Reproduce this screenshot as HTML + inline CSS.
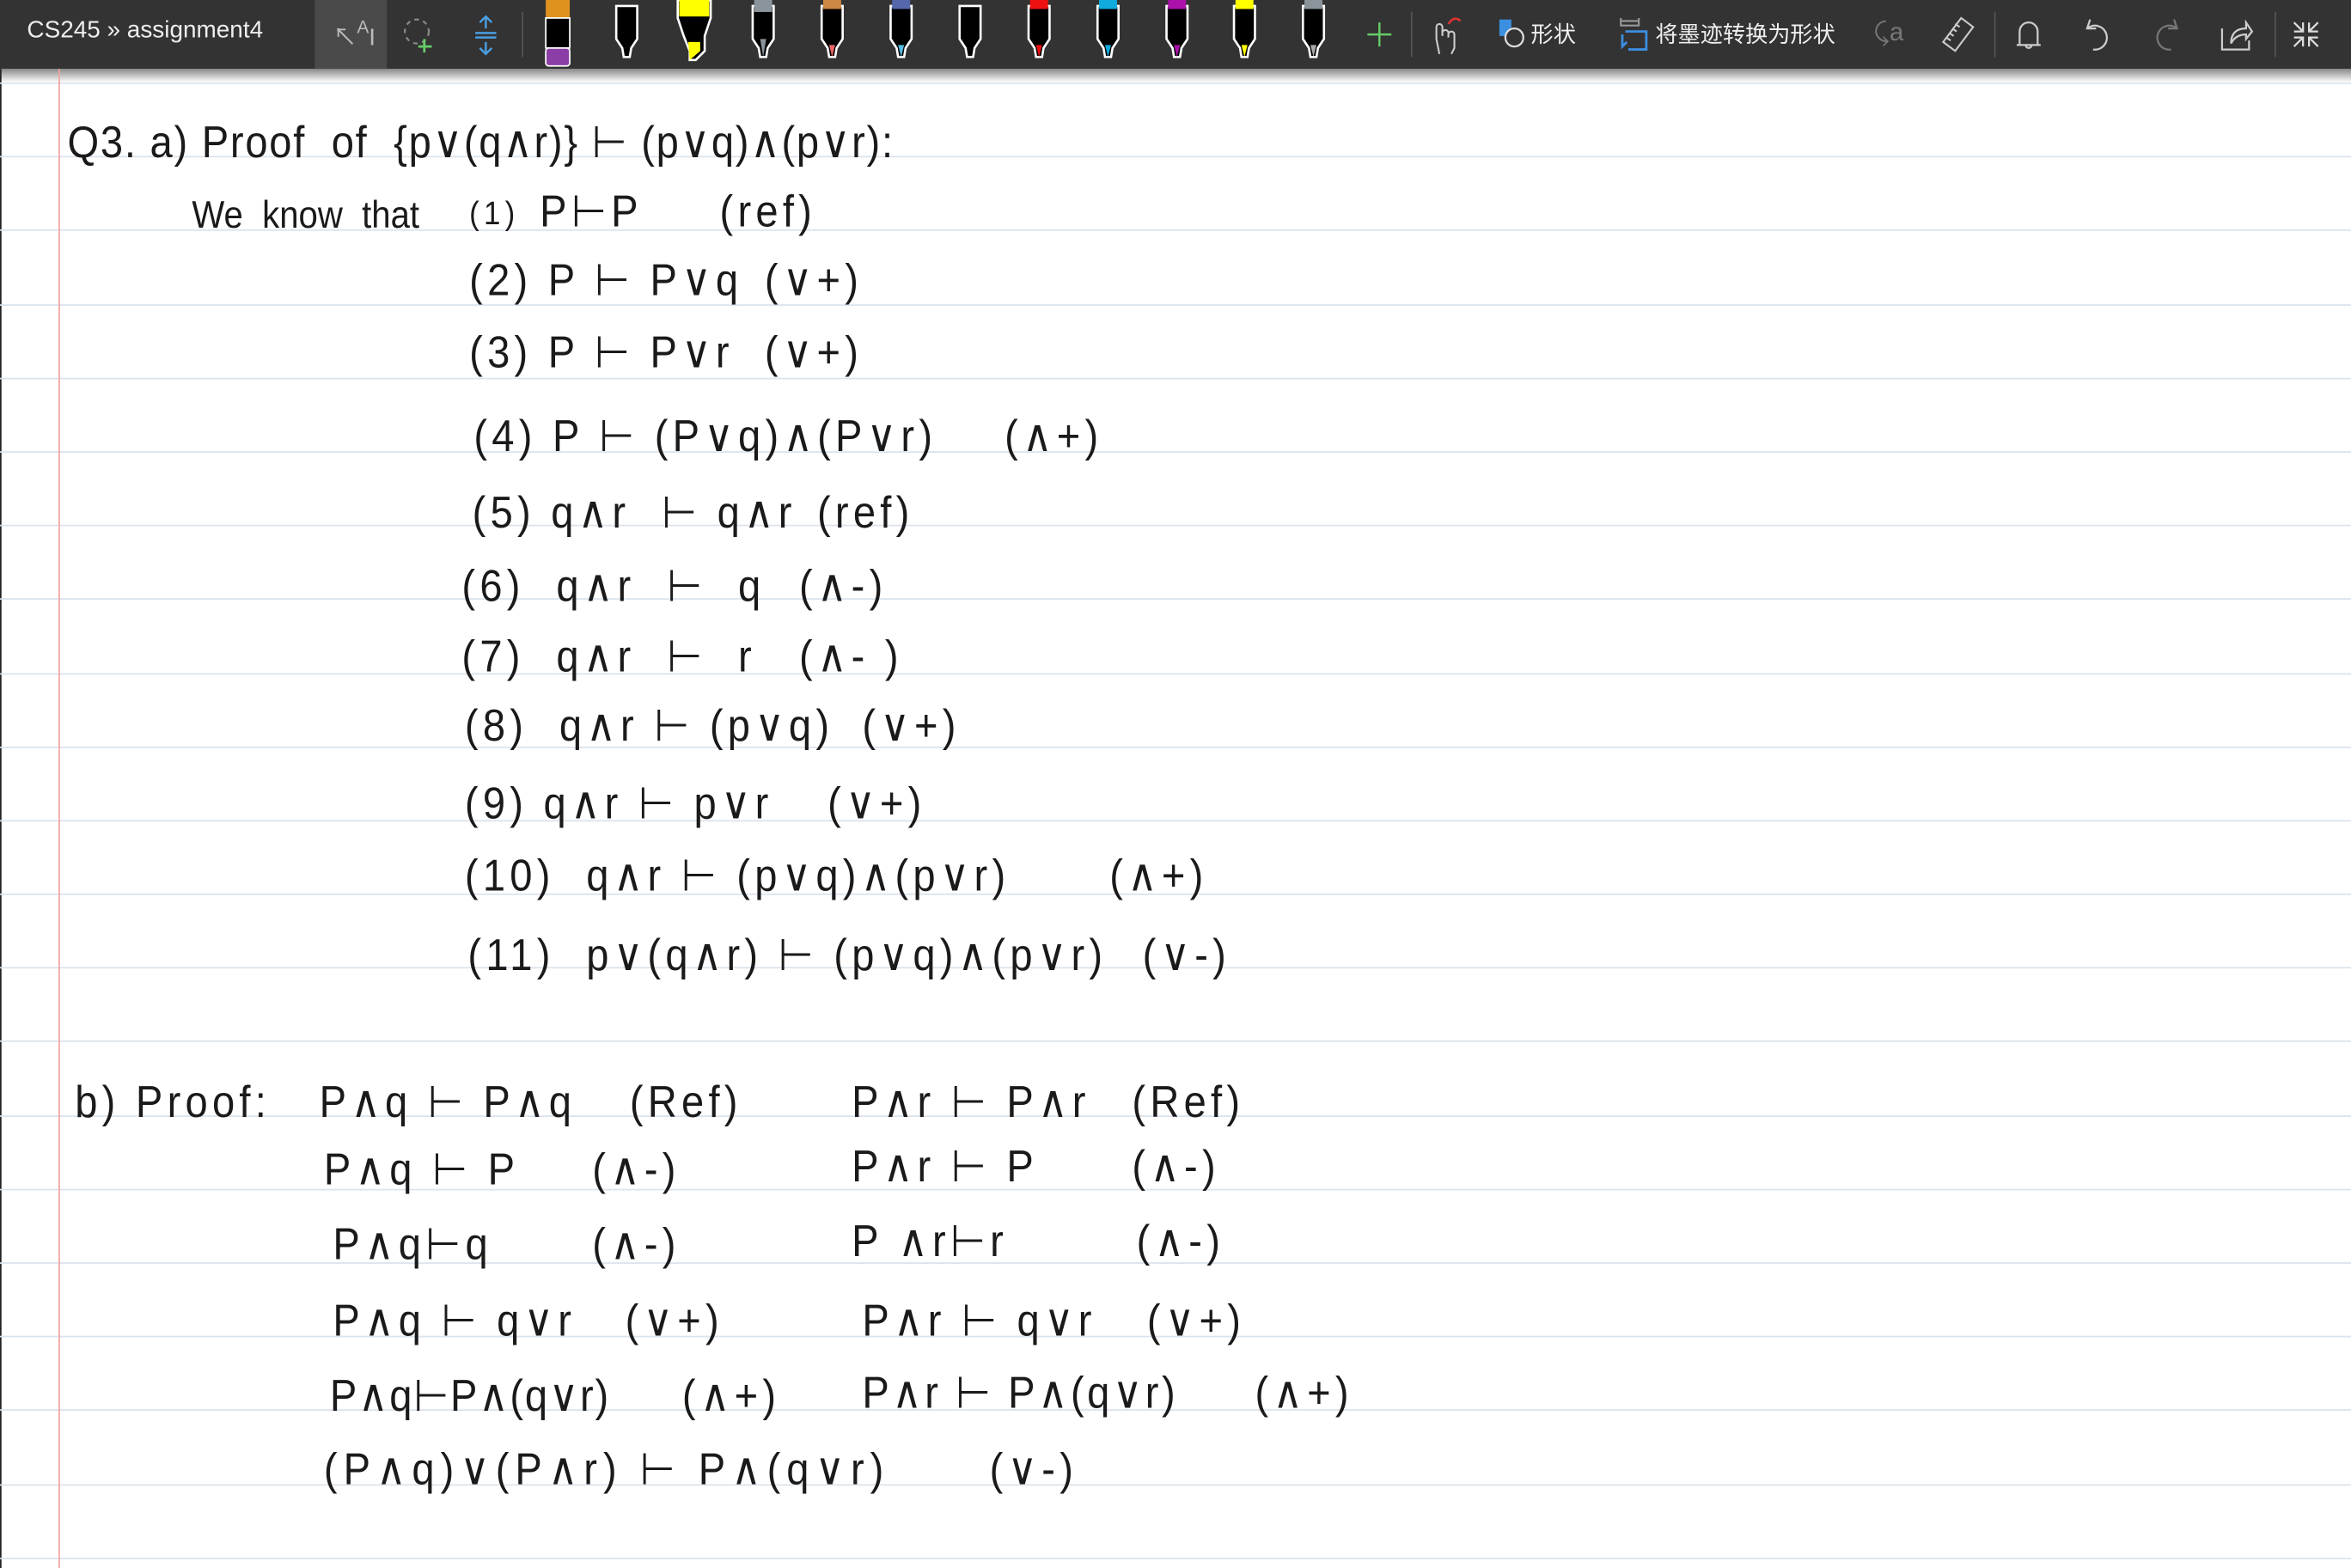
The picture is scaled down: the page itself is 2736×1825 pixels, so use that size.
<!DOCTYPE html>
<html><head><meta charset="utf-8"><style>
html,body{margin:0;padding:0;width:2736px;height:1824px;overflow:hidden;background:#fff}
#w{position:absolute;left:0;top:0;width:1568px;height:1045px;transform:scale(1.74490);transform-origin:0 0;background:#fff;font-family:"Liberation Sans Narrow","Liberation Sans",sans-serif}
.tb{position:absolute;left:0;top:0;width:1568px;height:46px;background:#333;color:#eee;font-family:"Liberation Sans","Noto Sans CJK SC",sans-serif}
.sh{position:absolute;left:0;top:46px;width:1568px;height:9px;background:linear-gradient(#8a8a8a,#fff)}
.ln{position:absolute;left:0;width:1568px;height:1px;background:#dbe3ec}
.mg{position:absolute;left:39px;top:46px;width:1px;height:1000px;background:#f1a3a3}
.lb{position:absolute;left:0;top:46px;width:1px;height:1000px;background:#222}
.h{position:absolute;font-size:27px;line-height:28px;color:#1a1a1a;letter-spacing:3px;white-space:pre;transform:scaleY(1.1)}
.pen{position:absolute;top:0}
.sep{position:absolute;top:8px;width:1px;height:30px;background:#555}
.ic{position:absolute;top:10px;color:#ccc;font-size:18px}
</style></head><body><div id="w">
<div class="tb">
<div style="position:absolute;left:18px;top:12px;font-size:16px;color:#eee">CS245 » assignment4</div>
<div style="position:absolute;left:210px;top:0;width:48px;height:46px;background:#4a4a4a"></div>
<div class="ic" style="left:222px;top:11px;color:#bbb;font-size:16px">↖<span style="font-size:12px;vertical-align:top">A</span>I</div>
<svg style="position:absolute;left:268px;top:10px" width="24" height="26"><circle cx="10" cy="11" r="8" fill="none" stroke="#888" stroke-dasharray="3 3" stroke-width="1.3"/><path d="M15 16v9M11 21h9" stroke="#6c6" stroke-width="1.6"/></svg>
<svg style="position:absolute;left:314px;top:9px" width="20" height="28"><path d="M10 2v8M6 6l4-4 4 4M3 13h14M3 16h14M10 19v8M6 23l4 4 4-4" stroke="#4a9ee0" stroke-width="1.4" fill="none"/></svg>
<div class="sep" style="left:348px"></div>
<svg style="position:absolute;left:0;top:0" width="900" height="46">
<defs><g id="p"><path d="M-7 12 L-7 34 L-3 40 L-2 46 L2 46 L3 40 L7 34 L7 12 Z" fill="#000" stroke="#fff" stroke-width="1.5"/></g></defs>
<g transform="translate(372,0)"><rect x="-8" y="0" width="16" height="12" fill="#e0921f"/><rect x="-8" y="12" width="16" height="20" fill="#000" stroke="#fff"/><rect x="-8" y="32" width="16" height="12" rx="2" fill="#8b3fa6" stroke="#fff"/></g>
<g transform="translate(418,-8)"><use href="#p"/></g>
<g transform="translate(463,0)"><path d="M-11 0 H11 V12 L7 24 V34 L1 40 H-3 V34 L-7 24 L-11 12Z" fill="#000" stroke="#fff" stroke-width="1.5"/><rect x="-10" y="0" width="20" height="11" fill="#ff0"/><path d="M-4 28 H4 V34 L-3 40Z" fill="#ff0"/></g>
<g transform="translate(509,-8)"><use href="#p"/><rect x="-6" y="8" width="12" height="8" fill="#8a949a"/><path d="M-2 34 L0 46 L2 34Z" fill="#8a949a"/></g>
<g transform="translate(555,-8)"><use href="#p"/><rect x="-6" y="8" width="12" height="6" fill="#c84"/><path d="M-2 38 L0 46 L2 38Z" fill="#e66"/></g>
<g transform="translate(601,-8)"><use href="#p"/><rect x="-6" y="8" width="12" height="6" fill="#56a"/><path d="M-2 38 L0 46 L2 38Z" fill="#5bd"/></g>
<g transform="translate(647,-8)"><use href="#p"/></g>
<g transform="translate(693,-8)"><use href="#p"/><rect x="-6" y="8" width="12" height="6" fill="#e11"/><path d="M-2 38 L0 46 L2 38Z" fill="#e11"/></g>
<g transform="translate(739,-8)"><use href="#p"/><rect x="-6" y="8" width="12" height="6" fill="#1ad"/><path d="M-2 38 L0 46 L2 38Z" fill="#1ad"/></g>
<g transform="translate(785,-8)"><use href="#p"/><rect x="-6" y="8" width="12" height="6" fill="#a1a"/><path d="M-2 38 L0 46 L2 38Z" fill="#a1a"/></g>
<g transform="translate(830,-8)"><use href="#p"/><rect x="-6" y="8" width="12" height="6" fill="#ff0"/><path d="M-2 38 L0 46 L2 38Z" fill="#ff0"/></g>
<g transform="translate(876,-8)"><use href="#p"/><rect x="-6" y="8" width="12" height="6" fill="#8a949a"/><path d="M-2 38 L0 46 L2 38Z" fill="#aaa"/></g>
</svg>
<svg style="position:absolute;left:910px;top:13px" width="20" height="20"><path d="M10 2v16M2 10h16" stroke="#6c6" stroke-width="1.4"/></svg>
<div class="sep" style="left:941px"></div>
<svg style="position:absolute;left:952px;top:10px" width="26" height="28"><path d="M8 26 L6 16 V8 a2 2 0 0 1 4 0 V14 M10 12 a2 2 0 0 1 4 0 V15 M14 13 a2 2 0 0 1 4 0 V22 L16 26" stroke="#ccc" fill="none" stroke-width="1.2"/><path d="M14 6 q4 -6 8 -2" stroke="#d33" fill="none" stroke-width="1.5"/></svg>
<svg style="position:absolute;left:999px;top:12px" width="20" height="22"><rect x="1" y="1" width="8" height="11" fill="#3b8fe0"/><circle cx="11" cy="13" r="6" fill="#333" stroke="#ddd" stroke-width="1.3"/></svg>
<div style="position:absolute;left:1021px;top:12px;font-size:15px;color:#eee">形状</div>
<svg style="position:absolute;left:1078px;top:11px" width="24" height="24"><path d="M3 1v5h12v-5M3 3h12" stroke="#999" fill="none" stroke-width="1.2"/><path d="M6 10h14v12H8 M4 12 v8 l3 -3" stroke="#3b8fe0" fill="none" stroke-width="1.6"/></svg>
<div style="position:absolute;left:1104px;top:12px;font-size:15px;color:#eee">将墨迹转换为形状</div>
<div class="ic" style="left:1250px;top:12px;color:#777;font-size:17px">⤹a</div>
<svg style="position:absolute;left:1294px;top:10px" width="24" height="26"><path d="M14 2 L22 8 L10 24 L2 18 Z M10 6l3 2M8 9l3 2M6 12l3 2M4 15l3 2" stroke="#ccc" fill="none" stroke-width="1.2"/></svg>
<div class="sep" style="left:1330px"></div>
<svg style="position:absolute;left:1342px;top:11px" width="22" height="26"><path d="M5 19 V10 a6 6 0 0 1 12 0 V19 H3 H19 M9 19 a2 2 0 0 0 4 0" stroke="#ccc" fill="none" stroke-width="1.3"/></svg>
<svg style="position:absolute;left:1388px;top:11px" width="22" height="24"><path d="M6 2 L4 8 L10 8 M4 8 a8 8 0 1 1 4 14" stroke="#ccc" fill="none" stroke-width="1.3"/></svg>
<svg style="position:absolute;left:1434px;top:11px" width="22" height="24"><path d="M16 2 L18 8 L12 8 M18 8 a8 8 0 1 0 -4 14" stroke="#777" fill="none" stroke-width="1.3"/></svg>
<svg style="position:absolute;left:1480px;top:11px" width="24" height="24"><path d="M2 8 V22 H20 V16 M8 18 q0 -10 10 -10 V4 L22 10 L18 15 V12 q-7 0 -10 6" stroke="#ccc" fill="none" stroke-width="1.3"/></svg>
<div class="sep" style="left:1517px"></div>
<svg style="position:absolute;left:1527px;top:12px" width="22" height="22"><path d="M3 3 l6 6 M9 3v6H3 M19 3 l-6 6 M13 3v6h6 M3 19 l6-6 M3 13h6v6 M19 19l-6-6 M13 19v-6h6" stroke="#ddd" fill="none" stroke-width="1.3"/></svg>
</div>
<div class="sh"></div>
<div class="lb"></div>
<div class="ln" style="top:55px"></div><div class="ln" style="top:104px"></div><div class="ln" style="top:153px"></div><div class="ln" style="top:203px"></div><div class="ln" style="top:252px"></div><div class="ln" style="top:301px"></div><div class="ln" style="top:350px"></div><div class="ln" style="top:399px"></div><div class="ln" style="top:449px"></div><div class="ln" style="top:498px"></div><div class="ln" style="top:547px"></div><div class="ln" style="top:596px"></div><div class="ln" style="top:645px"></div><div class="ln" style="top:694px"></div><div class="ln" style="top:744px"></div><div class="ln" style="top:793px"></div><div class="ln" style="top:842px"></div><div class="ln" style="top:891px"></div><div class="ln" style="top:940px"></div><div class="ln" style="top:990px"></div><div class="ln" style="top:1039px"></div>
<div class="mg"></div>

<div class="h" style="left:45px;top:81px;letter-spacing:1px">Q3. a) Proof  of  {p∨(q∧r)} ⊢ (p∨q)∧(p∨r):</div>
<div class="h" style="left:128px;top:129px;letter-spacing:0;font-size:23px">We  know  that</div><div class="h" style="left:313px;top:129px;font-size:20px">(1)</div><div class="h" style="left:360px;top:127px">P⊢P</div><div class="h" style="left:480px;top:127px">(ref)</div>
<div class="h" style="left:313px;top:173px">(2) P ⊢ P∨q</div><div class="h" style="left:510px;top:173px">(∨+)</div>
<div class="h" style="left:313px;top:221px">(3) P ⊢ P∨r</div><div class="h" style="left:510px;top:221px">(∨+)</div>
<div class="h" style="left:316px;top:277px">(4) P ⊢ (P∨q)∧(P∨r)</div><div class="h" style="left:670px;top:277px">(∧+)</div>
<div class="h" style="left:315px;top:328px">(5) q∧r  ⊢ q∧r</div><div class="h" style="left:545px;top:328px">(ref)</div>
<div class="h" style="left:308px;top:377px">(6)  q∧r  ⊢  q</div><div class="h" style="left:533px;top:377px">(∧-)</div>
<div class="h" style="left:308px;top:424px">(7)  q∧r  ⊢  r</div><div class="h" style="left:533px;top:424px">(∧- )</div>
<div class="h" style="left:310px;top:470px">(8)  q∧r ⊢ (p∨q)</div><div class="h" style="left:575px;top:470px">(∨+)</div>
<div class="h" style="left:310px;top:522px">(9) q∧r ⊢ p∨r</div><div class="h" style="left:552px;top:522px">(∨+)</div>
<div class="h" style="left:310px;top:570px">(10)  q∧r ⊢ (p∨q)∧(p∨r)</div><div class="h" style="left:740px;top:570px">(∧+)</div>
<div class="h" style="left:312px;top:623px">(11)  p∨(q∧r) ⊢ (p∨q)∧(p∨r)</div><div class="h" style="left:762px;top:623px">(∨-)</div>

<div class="h" style="left:50px;top:721px">b) Proof:</div>
<div class="h" style="left:213px;top:721px">P∧q ⊢ P∧q</div><div class="h" style="left:420px;top:721px">(Ref)</div>
<div class="h" style="left:568px;top:721px">P∧r ⊢ P∧r</div><div class="h" style="left:755px;top:721px">(Ref)</div>
<div class="h" style="left:216px;top:766px">P∧q ⊢ P</div><div class="h" style="left:395px;top:766px">(∧-)</div>
<div class="h" style="left:568px;top:764px">P∧r ⊢ P</div><div class="h" style="left:755px;top:764px">(∧-)</div>
<div class="h" style="left:222px;top:816px">P∧q⊢q</div><div class="h" style="left:395px;top:816px">(∧-)</div>
<div class="h" style="left:568px;top:814px">P ∧r⊢r</div><div class="h" style="left:758px;top:814px">(∧-)</div>
<div class="h" style="left:222px;top:867px">P∧q ⊢ q∨r</div><div class="h" style="left:417px;top:867px">(∨+)</div>
<div class="h" style="left:575px;top:867px">P∧r ⊢ q∨r</div><div class="h" style="left:765px;top:867px">(∨+)</div>
<div class="h" style="left:220px;top:917px;letter-spacing:1px">P∧q⊢P∧(q∨r)</div><div class="h" style="left:455px;top:917px">(∧+)</div>
<div class="h" style="left:575px;top:915px;letter-spacing:2px">P∧r ⊢ P∧(q∨r)</div><div class="h" style="left:837px;top:915px">(∧+)</div>
<div class="h" style="left:216px;top:966px;letter-spacing:4px">(P∧q)∨(P∧r) ⊢ P∧(q∨r)</div><div class="h" style="left:660px;top:966px">(∨-)</div>
</div></body></html>
